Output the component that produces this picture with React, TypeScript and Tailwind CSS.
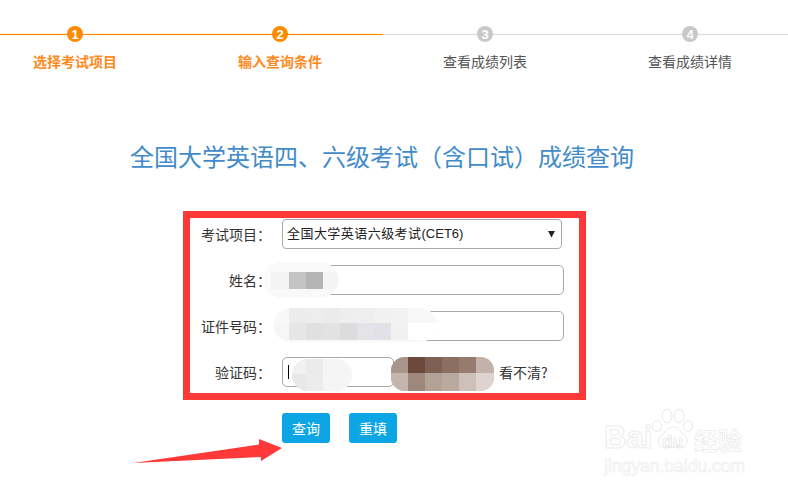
import React from "react";

const font = { fontFamily: '"Noto Sans CJK SC", "Liberation Sans", sans-serif' };

const steps = [
  { n: 1, label: "选择考试项目", done: true },
  { n: 2, label: "输入查询条件", done: true },
  { n: 3, label: "查看成绩列表", done: false },
  { n: 4, label: "查看成绩详情", done: false },
];

function Step({ n, label, done }: { n: number; label: string; done: boolean }) {
  return (
    <div className="w-[205px] shrink-0 flex flex-col items-center">
      <div className="relative w-full h-[16px] flex justify-center">
        <div className={`absolute left-0 right-0 top-[8px] h-[1px] ${done ? "bg-[#ff8a00] shadow-[0_0_1px_#ff8a00]" : "bg-[#dcdcdc] shadow-[0_0_1px_#dcdcdc]"}`} />
        <div
          className={`relative w-[16px] h-[16px] rounded-full flex items-center justify-center text-white text-[13px] font-bold leading-none font-['Liberation_Sans'] ${
            done ? "bg-[#ff8a00]" : "bg-[#c8c8c8]"
          }`}
        >
          {n}
        </div>
      </div>
      <div className={`mt-[9px] text-[14px] leading-[20px] ${done ? "text-[#ff8a1e] font-bold" : "text-[#555555]"}`}>{label}</div>
    </div>
  );
}

function Mosaic({ className, cols, rows, cells }: { className: string; cols: string; rows: string; cells: string[] }) {
  return (
    <div className={`absolute overflow-hidden ${className}`}>
      <div className={`grid ${cols} ${rows} w-full h-full`}>
        {cells.map((c, i) => (
          <div key={i} className={c} />
        ))}
      </div>
    </div>
  );
}

function Row({ label, children }: { label: string; children: React.ReactNode }) {
  return (
    <div className="flex items-center">
      <div className="w-[81px] text-right text-[14px] leading-[30px] text-[#333333]">{label + "\uFF1A"}</div>
      <div className="ml-[11px] relative flex items-center">{children}</div>
    </div>
  );
}

function Input({ className }: { className: string }) {
  return <div className={`h-[30px] bg-white border border-[#a9a9a9] rounded-[5px] ${className}`} />;
}

function Watermark() {
  return (
    <div className="absolute left-[600px] top-[404px] w-[150px] h-[76px] pointer-events-none">
      <div className="absolute left-[4px] top-[16px] text-[31px] leading-[36px] font-bold text-transparent [-webkit-text-stroke:1px_#ececec] font-['Liberation_Sans']">Bai</div>
      <svg className="absolute left-[48px] top-[0px]" width="50" height="50" viewBox="0 0 50 50" fill="none" stroke="#e8e8e8" strokeWidth="1">
        <ellipse cx="9" cy="22" rx="4.5" ry="5.5" />
        <ellipse cx="19" cy="12" rx="5" ry="6.5" />
        <ellipse cx="31" cy="12" rx="5" ry="6.5" />
        <ellipse cx="40" cy="22" rx="4.5" ry="5.5" />
        <path d="M25 23c6 0 8 6 12 9 5 4 1 13-6 12-3-.5-4-1-6-1s-4 .5-7 1c-7 1-10-8-5-12 4-3 6-9 12-9z" />
      </svg>
      <div className="absolute left-[62px] top-[28px] text-[17px] leading-[20px] font-bold text-transparent [-webkit-text-stroke:0.7px_#e4e4e4] font-['Liberation_Sans']">du</div>
      <div className="absolute left-[94px] top-[22px] text-[24px] leading-[28px] font-bold text-transparent [-webkit-text-stroke:0.7px_#eaeaea]">经验</div>
      <div className="absolute left-[4px] top-[50px] text-[17.5px] leading-[24px] text-transparent [-webkit-text-stroke:0.6px_#ececec] font-['Liberation_Sans'] whitespace-nowrap">jingyan.baidu.com</div>
    </div>
  );
}

export default function App() {
  return (
    <div className="relative w-[788px] h-[491px] bg-white overflow-hidden" style={font}>
      <div className="flex ml-[-27.5px] pt-[26px]">
        {steps.map((s) => (
          <Step key={s.n} {...s} />
        ))}
      </div>

      <h1 className="mt-[68px] ml-[130px] text-[24px] leading-[34px] font-normal text-[#428bca] whitespace-nowrap">
        {"全国大学英语四、六级考试\uFF08含口试\uFF09成绩查询"}
      </h1>

      <div className="mt-[38px] ml-[183px] w-[403px] h-[189px] border-[7px] border-[#ff3838] pt-[1px] flex flex-col gap-[16px]">
        <Row label="考试项目">
          <div className="w-[280px] h-[30px] border border-[#a9a9a9] rounded-[4px] flex items-center justify-between pl-[4px] pr-[6px] text-[13px] text-[#222222]">
            <span className="font-normal font-['Liberation_Sans','Noto_Sans_CJK_SC',sans-serif]">
              <span className="tracking-[0.45px]">全国大学英语六级考试</span>(CET6)
            </span>
            <svg width="7" height="7" viewBox="0 0 7 7"><path d="M0 0h7L3.5 6.5z" fill="#222" /></svg>
          </div>
        </Row>
        <Row label="姓名">
          <Input className="w-[282px]" />
          <Mosaic
            className="left-[-18px] top-[-3px] w-[74px] h-[36px] rounded-[18px] bg-[#f9f9f9]"
            cols="grid-cols-[7px_18px_17px_17px_15px]"
            rows="grid-rows-[10px_17px_9px]"
            cells={[
              "bg-[#fbfbfb]", "bg-[#f9f9f9]", "bg-[#f9f9f9]", "bg-[#f9f9f9]", "bg-[#f9f9f9]",
              "bg-[#fbfbfb]", "bg-[#f4f4f4]", "bg-[#c4c4c4]", "bg-[#b4b4b4]", "bg-[#f4f4f4]",
            ]}
          />
        </Row>
        <Row label="证件号码">
          <Input className="w-[282px]" />
          <Mosaic
            className="left-[-8px] top-[-3px] w-[163px] h-[34px] rounded-[17px] bg-[#f8f8f8]"
            cols="grid-cols-[15px_17px_17px_17px_17px_17px_17px_17px_29px]"
            rows="grid-rows-[15px_17px]"
            cells={[
              "bg-[#f8f8f8]", "bg-[#ececec]", "bg-[#ededed]", "bg-[#ebebeb]", "bg-[#eeeeee]", "bg-[#efefef]", "bg-[#f1f1f1]", "bg-[#f2f2f2]", "bg-[#f8f8f8]",
              "bg-[#f6f6f6]", "bg-[#e6e6e6]", "bg-[#e0e0e0]", "bg-[#e2e2e2]", "bg-[#dcdcdc]", "bg-[#e4e4e8]", "bg-[#e2e2e6]", "bg-[#f1f1f1]", "bg-white",
            ]}
          />
        </Row>
        <Row label="验证码">
          <div className="w-[112px] h-[30px] bg-white border border-[#a9a9a9] rounded-[5px] flex items-center pl-[5px]">
            <div className="w-[1px] h-[14px] bg-black" />
          </div>
          <Mosaic
            className="left-[10px] top-[2px] w-[60px] h-[32px] rounded-[16px] bg-[#f3f3f3]"
            cols="grid-cols-[14px_17px_29px]"
            rows="grid-rows-[15px_17px]"
            cells={["bg-[#f1f1f1]", "bg-[#ebebeb]", "bg-[#f5f5f5]", "bg-[#e8e8e8]", "bg-[#ececec]", "bg-[#f5f5f5]"]}
          />
          <Mosaic
            className="left-[109px] top-[0px] w-[103px] h-[34px] rounded-[14px] bg-[#c4b5ad]"
            cols="grid-cols-[17px_17px_17px_17px_17px_18px]"
            rows="grid-rows-[16px_18px]"
            cells={[
              "bg-[#a8948a]", "bg-[#6b4a3c]", "bg-[#7e6154]", "bg-[#8b7062]", "bg-[#967b6e]", "bg-[#c2b2a9]",
              "bg-[#c4b5ae]", "bg-[#9e877c]", "bg-[#b3a196]", "bg-[#baa99f]", "bg-[#cdc0ba]", "bg-[#ddd4d0]",
            ]}
          />
          <span className="absolute left-[217px] top-[5px] whitespace-nowrap text-[14px] leading-[20px] text-[#333333]">看不清?</span>
        </Row>
      </div>

      <div className="ml-[282px] mt-[13px] flex gap-[19px]">
        <div className="w-[48px] h-[30px] rounded-[3px] bg-[#0ea5e4] text-white text-[14px] flex items-center justify-center">查询</div>
        <div className="w-[48px] h-[30px] rounded-[3px] bg-[#0ea5e4] text-white text-[14px] flex items-center justify-center">重填</div>
      </div>

      <svg className="absolute left-0 top-0 pointer-events-none" width="788" height="491">
        <polygon points="133,463 259,444.5 259,439 282,448 261,461 261,457" fill="#ff3838" />
      </svg>

      <Watermark />
    </div>
  );
}
